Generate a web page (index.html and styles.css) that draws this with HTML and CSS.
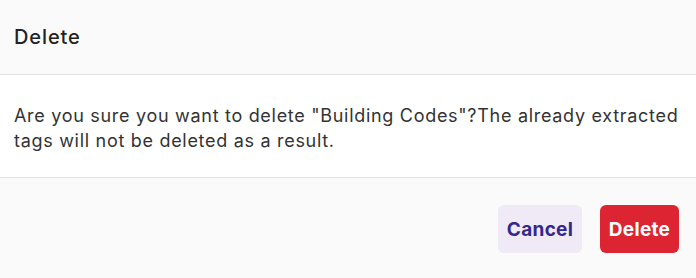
FILE: index.html
```html
<!DOCTYPE html>
<html>
<head>
<meta charset="utf-8">
<link rel="stylesheet" href="styles.css">
</head>
<body>
<div class="dialog">
  <div class="header"><h2 class="title">Delete</h2></div>
  <div class="body">
    <p class="message">Are you sure you want to delete "Building Codes"?The already extracted tags will not be deleted as a result.</p>
  </div>
  <div class="footer">
    <button class="btn btn-cancel">Cancel</button>
    <button class="btn btn-delete">Delete</button>
  </div>
</div>
</body>
</html>
```
FILE: styles.css
```css
* { box-sizing: border-box; }
html, body { margin: 0; padding: 0; background: #fafafa; }
body { font-family: Inter, "Noto Sans", sans-serif; }
.dialog { width: 696px; }
.header {
  height: 75px;
  background: #fafafa;
  border-bottom: 1px solid #e2e2e2;
  display: flex;
  align-items: center;
  padding: 0 14px;
}
.title {
  margin: 0;
  font-size: 20px;
  font-weight: 500;
  letter-spacing: 0.9px;
  color: #222;
}
.body {
  background: #fff;
  padding: 28px 14px 24px;
  border-bottom: 1px solid #e2e2e2;
}
.message {
  margin: 0;
  font-size: 18px;
  line-height: 25px;
  letter-spacing: 0.7px;
  color: #333;
}
.footer {
  background: #fafafa;
  display: flex;
  justify-content: flex-end;
  gap: 18px;
  padding: 27px 17px 25px;
}
.btn {
  height: 48px;
  border: none;
  border-radius: 6px;
  font-family: Inter, "Noto Sans", sans-serif;
  font-size: 19px;
  font-weight: 700;
  letter-spacing: 0.3px;
  padding: 0;
  cursor: pointer;
}
.btn-cancel { background: #efeaf6; color: #34288a; width: 84px; }
.btn-delete { background: #dc2433; color: #fff; width: 79px; }
```
